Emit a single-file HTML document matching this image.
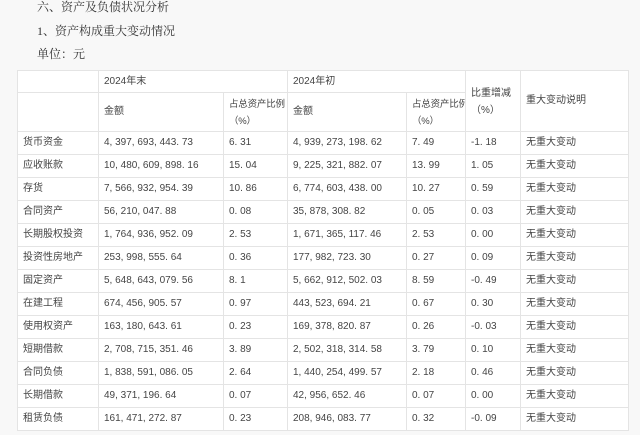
<!DOCTYPE html>
<html><head><meta charset="utf-8"><style>
body{margin:0;width:640px;height:435px;overflow:hidden;background:#f8f8f8;font-family:"Liberation Serif","Noto Serif CJK SC",serif;color:#333;}
p{position:absolute;left:37px;margin:0;font-size:12px;line-height:14px;}
table{position:absolute;left:17px;top:70px;width:611px;border-collapse:collapse;background:#fff;font-size:10px;table-layout:fixed;}
td{box-sizing:border-box;border:1.5px solid #e4e4e4;padding:0 0 0 5px;height:23px;white-space:nowrap;overflow:hidden;line-height:14px;font-family:"Liberation Sans","Noto Sans CJK SC",sans-serif;color:#444}
tr.h1 td{height:22px}
tr.h2 td{height:39px}
.two{line-height:17px;padding-top:2px}
.sm{font-size:9.5px;letter-spacing:-0.2px}
</style></head><body>
<p style="top:0px">六、资产及负债状况分析</p>
<p style="top:24px">1、资产构成重大变动情况</p>
<p style="top:47px">单位：元</p>
<table>
<colgroup><col style="width:81px"><col style="width:125px"><col style="width:64px"><col style="width:119px"><col style="width:59px"><col style="width:55px"><col style="width:108px"></colgroup>
<tr class="h1"><td></td><td colspan="2">2024年末</td><td colspan="2">2024年初</td><td rowspan="2" class="two">比重增减<br>（%）</td><td rowspan="2">重大变动说明</td></tr>
<tr class="h2"><td></td><td>金额</td><td class="two sm">占总资产比例<br>（%）</td><td>金额</td><td class="two sm">占总资产比例<br>（%）</td></tr>
<tr><td>货币资金</td><td>4, 397, 693, 443. 73</td><td>6. 31</td><td>4, 939, 273, 198. 62</td><td>7. 49</td><td>-1. 18</td><td>无重大变动</td></tr>
<tr><td>应收账款</td><td>10, 480, 609, 898. 16</td><td>15. 04</td><td>9, 225, 321, 882. 07</td><td>13. 99</td><td>1. 05</td><td>无重大变动</td></tr>
<tr><td>存货</td><td>7, 566, 932, 954. 39</td><td>10. 86</td><td>6, 774, 603, 438. 00</td><td>10. 27</td><td>0. 59</td><td>无重大变动</td></tr>
<tr><td>合同资产</td><td>56, 210, 047. 88</td><td>0. 08</td><td>35, 878, 308. 82</td><td>0. 05</td><td>0. 03</td><td>无重大变动</td></tr>
<tr><td>长期股权投资</td><td>1, 764, 936, 952. 09</td><td>2. 53</td><td>1, 671, 365, 117. 46</td><td>2. 53</td><td>0. 00</td><td>无重大变动</td></tr>
<tr><td>投资性房地产</td><td>253, 998, 555. 64</td><td>0. 36</td><td>177, 982, 723. 30</td><td>0. 27</td><td>0. 09</td><td>无重大变动</td></tr>
<tr><td>固定资产</td><td>5, 648, 643, 079. 56</td><td>8. 1</td><td>5, 662, 912, 502. 03</td><td>8. 59</td><td>-0. 49</td><td>无重大变动</td></tr>
<tr><td>在建工程</td><td>674, 456, 905. 57</td><td>0. 97</td><td>443, 523, 694. 21</td><td>0. 67</td><td>0. 30</td><td>无重大变动</td></tr>
<tr><td>使用权资产</td><td>163, 180, 643. 61</td><td>0. 23</td><td>169, 378, 820. 87</td><td>0. 26</td><td>-0. 03</td><td>无重大变动</td></tr>
<tr><td>短期借款</td><td>2, 708, 715, 351. 46</td><td>3. 89</td><td>2, 502, 318, 314. 58</td><td>3. 79</td><td>0. 10</td><td>无重大变动</td></tr>
<tr><td>合同负债</td><td>1, 838, 591, 086. 05</td><td>2. 64</td><td>1, 440, 254, 499. 57</td><td>2. 18</td><td>0. 46</td><td>无重大变动</td></tr>
<tr><td>长期借款</td><td>49, 371, 196. 64</td><td>0. 07</td><td>42, 956, 652. 46</td><td>0. 07</td><td>0. 00</td><td>无重大变动</td></tr>
<tr><td>租赁负债</td><td>161, 471, 272. 87</td><td>0. 23</td><td>208, 946, 083. 77</td><td>0. 32</td><td>-0. 09</td><td>无重大变动</td></tr>
</table>
</body></html>
